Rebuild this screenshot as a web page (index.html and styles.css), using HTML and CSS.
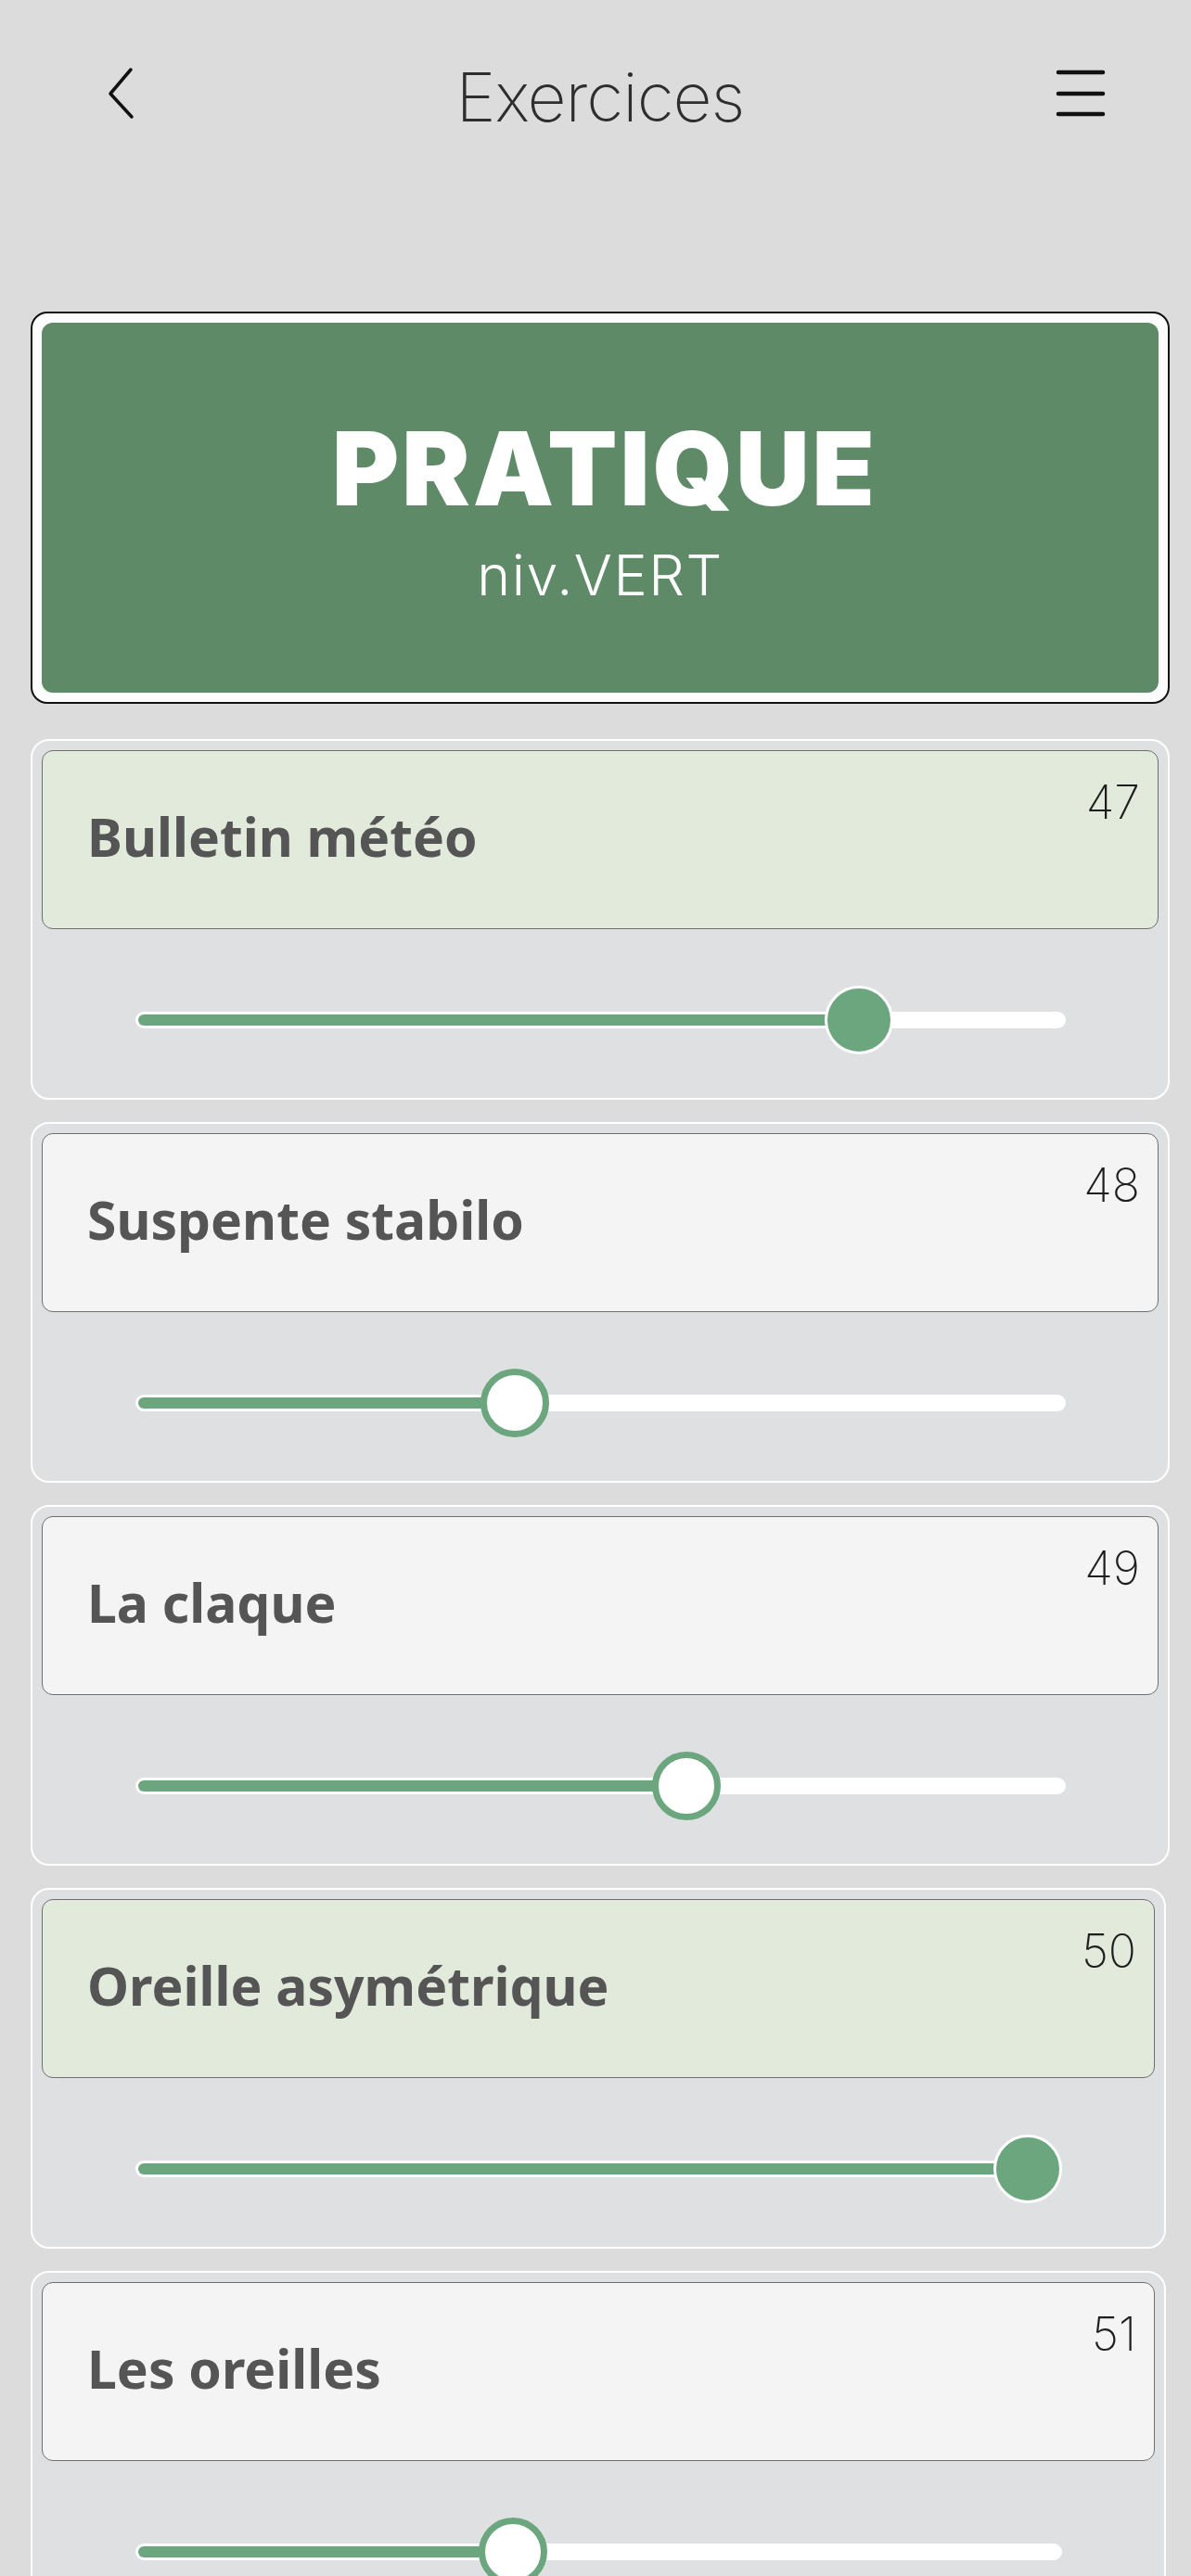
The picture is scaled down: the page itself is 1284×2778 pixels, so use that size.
FILE: index.html
```html
<!DOCTYPE html>
<html lang="fr">
<head>
<meta charset="utf-8">
<title>Exercices</title>
<link rel="stylesheet" href="styles.css">
</head>
<body>
<header class="topbar">
  <button class="icon-btn back" aria-label="Retour">
    <svg width="31" height="59" viewBox="0 0 31 59"><polyline points="26,4 4,30 27,55" fill="none" stroke="#111" stroke-width="3.5" stroke-linecap="round" stroke-linejoin="round"/></svg>
  </button>
  <h1 class="title">Exercices</h1>
  <button class="icon-btn menu" aria-label="Menu">
    <svg width="54" height="54" viewBox="0 0 54 54"><g stroke="#111" stroke-width="4.5" stroke-linecap="round"><line x1="3" y1="4" x2="51" y2="4"/><line x1="3" y1="27" x2="51" y2="27"/><line x1="3" y1="49" x2="51" y2="49"/></g></svg>
  </button>
</header>

<main class="content">
  <section class="hero">
    <div class="hero-inner">
      <div class="hero-title">PRATIQUE</div>
      <div class="hero-sub">niv.VERT</div>
    </div>
  </section>

  <article class="ex-card">
    <div class="ex-box done">
      <span class="ex-name">Bulletin météo</span>
      <span class="ex-num">47</span>
    </div>
    <div class="slider" style="--v:0.8">
      <div class="track"><div class="fill"></div></div>
      <div class="thumb filled"></div>
    </div>
  </article>

  <article class="ex-card">
    <div class="ex-box">
      <span class="ex-name">Suspente stabilo</span>
      <span class="ex-num">48</span>
    </div>
    <div class="slider" style="--v:0.4">
      <div class="track"><div class="fill"></div></div>
      <div class="thumb"></div>
    </div>
  </article>

  <article class="ex-card">
    <div class="ex-box">
      <span class="ex-name">La claque</span>
      <span class="ex-num">49</span>
    </div>
    <div class="slider" style="--v:0.6">
      <div class="track"><div class="fill"></div></div>
      <div class="thumb"></div>
    </div>
  </article>

  <article class="ex-card narrow">
    <div class="ex-box done">
      <span class="ex-name">Oreille asymétrique</span>
      <span class="ex-num">50</span>
    </div>
    <div class="slider" style="--v:1">
      <div class="track"><div class="fill"></div></div>
      <div class="thumb filled"></div>
    </div>
  </article>

  <article class="ex-card narrow">
    <div class="ex-box">
      <span class="ex-name">Les oreilles</span>
      <span class="ex-num">51</span>
    </div>
    <div class="slider" style="--v:0.4">
      <div class="track"><div class="fill"></div></div>
      <div class="thumb"></div>
    </div>
  </article>
</main>
</body>
</html>
```
FILE: styles.css
```css
* { box-sizing: border-box; }

html, body {
  margin: 0;
  padding: 0;
  background: #dcdcdc;
}

body {
  font-family: "Inter", "Noto Sans", sans-serif;
  color: #333;
}

.topbar {
  display: grid;
  grid-template-columns: 1fr auto 1fr;
  align-items: start;
  padding: 68px 92px 0 115px;
  height: 141px;
}

.icon-btn {
  background: none;
  border: 0;
  padding: 0;
  margin: 0;
  display: block;
  line-height: 0;
}

.back {
  justify-self: start;
  margin-top: 3px;
}

.menu {
  justify-self: end;
  margin-top: 6px;
}

.title {
  margin: 0 13px 0 0;
  font-family: "Inter", sans-serif;
  font-weight: 200;
  font-size: 73px;
  line-height: 73px;
  color: #2e2e2e;
  letter-spacing: -1px;
}

.content {
  padding: 195px 23px 0 33px;
}

.hero {
  border: 2px solid #111;
  border-radius: 18px;
  background: #fbfcfb;
  padding: 10px;
}

.hero-inner {
  background: #5f8a67;
  border-radius: 12px;
  height: 399px;
  padding-top: 102px;
  display: flex;
  flex-direction: column;
  align-items: center;
  color: #fff;
}

.hero-title {
  font-family: "Inter", sans-serif;
  font-weight: 900;
  font-size: 110px;
  line-height: 110px;
  letter-spacing: 3px;
  margin-left: 10px;
}

.hero-sub {
  margin-top: 30px;
  font-family: "Inter", sans-serif;
  font-weight: 300;
  font-size: 61px;
  line-height: 61px;
  letter-spacing: 1.5px;
}

.ex-card {
  margin-top: 38px;
  border: 2px solid #fff;
  border-radius: 20px;
  background: #dfe0e2;
  padding: 10px;
}

.ex-card + .ex-card {
  margin-top: 24px;
}

.ex-card.narrow {
  margin-right: 4px;
}

.ex-box {
  position: relative;
  height: 193px;
  border: 1px solid #6e6e6e;
  border-radius: 12px;
  background: #f4f4f4;
  padding: 64px 0 0 48px;
}

.ex-box.done {
  background: #e1eadb;
}

.ex-name {
  display: block;
  font-family: "Noto Sans", sans-serif;
  font-weight: 700;
  font-size: 57px;
  line-height: 56px;
  color: #555;
}

.ex-num {
  position: absolute;
  top: 30px;
  right: 19px;
  font-family: "Inter", sans-serif;
  font-weight: 200;
  font-size: 50px;
  line-height: 50px;
  color: #1e1e1e;
}

.slider {
  position: relative;
  height: 74px;
  margin: 61px 100px 37px 101px;
  display: flex;
  align-items: center;
}

.track {
  position: relative;
  width: 100%;
  height: 18px;
  border-radius: 9px;
  background: #fff;
}

.fill {
  position: absolute;
  left: 3px;
  top: 3px;
  height: 12px;
  border-radius: 6px;
  background: #6ba67e;
  width: calc(var(--v) * (100% - 74px) + 37px);
}

.thumb {
  position: absolute;
  top: 0;
  left: calc(var(--v) * (100% - 74px));
  width: 74px;
  height: 74px;
  border-radius: 50%;
  background: #fff;
  border: 7px solid #6ba67e;
}

.thumb.filled {
  background: #6ba67e;
  border: 3px solid #fff;
}
```
